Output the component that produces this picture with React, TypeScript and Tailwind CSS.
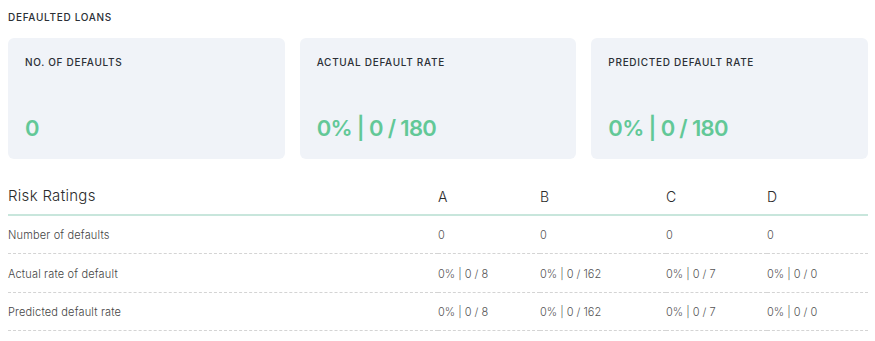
const cards = [
  { label: "NO. OF DEFAULTS", value: "0" },
  { label: "ACTUAL DEFAULT RATE", value: "0% | 0 / 180" },
  { label: "PREDICTED DEFAULT RATE", value: "0% | 0 / 180" },
];

const grades = ["A", "B", "C", "D"];
const colWidths = ["w-[102px]", "w-[126px]", "w-[101px]", "w-[101px]"];

const rows = [
  { label: "Number of defaults", values: ["0", "0", "0", "0"] },
  {
    label: "Actual rate of default",
    values: ["0% | 0 / 8", "0% | 0 / 162", "0% | 0 / 7", "0% | 0 / 0"],
  },
  {
    label: "Predicted default rate",
    values: ["0% | 0 / 8", "0% | 0 / 162", "0% | 0 / 7", "0% | 0 / 0"],
  },
];

export default function App() {
  return (
    <div className="w-[875px] h-[341px] bg-white px-2 pt-[11px] font-['Inter',sans-serif] overflow-hidden">
      <h2 className="text-[10px] font-medium tracking-[0.07em] text-[#2b2f36] leading-[12px]">
        DEFAULTED LOANS
      </h2>

      <div className="mt-[15px] flex gap-[15px] w-[860px]">
        {cards.map((card) => (
          <div
            key={card.label}
            className="flex-1 h-[121px] rounded-md bg-[#f0f3f8] pl-[17px] pt-[18px] flex flex-col"
          >
            <span className="text-[10px] font-medium tracking-[0.07em] text-[#2b2f36] leading-[12px]">
              {card.label}
            </span>
            <span className="mt-auto mb-[18px] text-[22px] font-semibold tracking-[-0.03em] text-[#62c897] leading-[26px]">
              {card.value}
            </span>
          </div>
        ))}
      </div>

      <table className="mt-[17px] w-[860px] border-collapse text-left">
        <thead>
          <tr className="border-b-2 border-[#c8e6dc]">
            <th className="h-[39px] pt-[2px] text-[15px] font-light text-[#2b2b2b] tracking-[0.02em]">
              Risk Ratings
            </th>
            {grades.map((g, i) => (
              <th
                key={g}
                className={`${colWidths[i]} pt-[2px] text-[14px] font-light text-[#2b2b2b]`}
              >
                {g}
              </th>
            ))}
          </tr>
        </thead>
        <tbody>
          {rows.map((row) => (
            <tr key={row.label} className="border-b border-dashed border-[#d4d4d4]">
              <td className="h-[38.5px] pt-[2px] text-[11px] font-light tracking-[0.015em] text-[#444]">
                {row.label}
              </td>
              {row.values.map((v, i) => (
                <td key={i} className="pt-[2px] text-[11px] font-light text-[#555]">
                  {v}
                </td>
              ))}
            </tr>
          ))}
        </tbody>
      </table>
    </div>
  );
}
